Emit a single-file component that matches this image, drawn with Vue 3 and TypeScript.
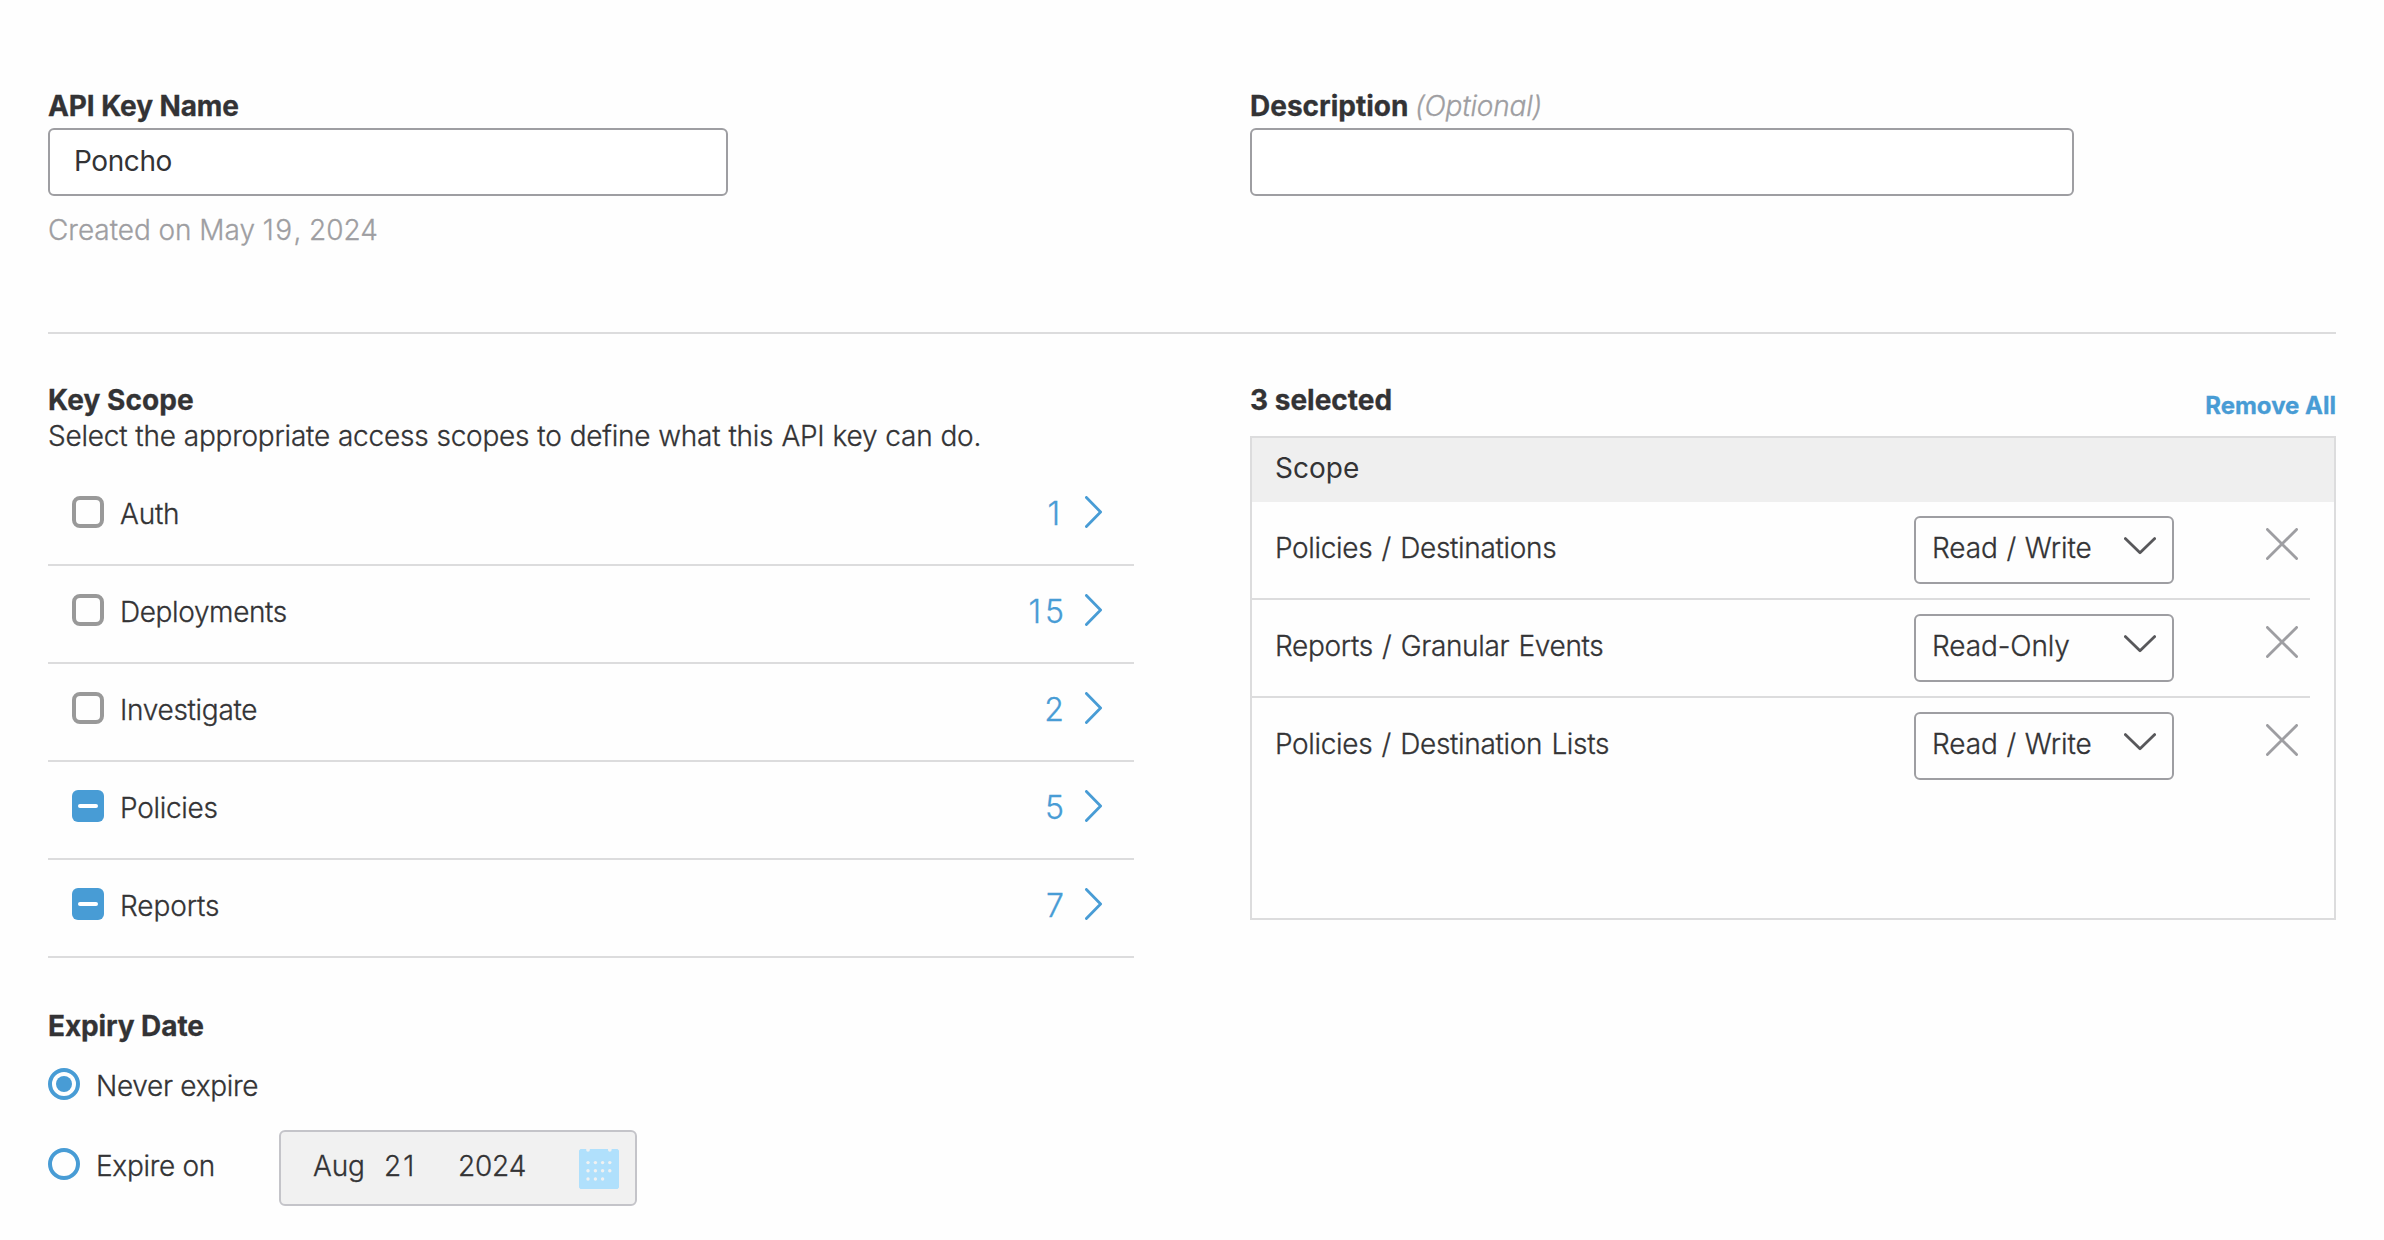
<script setup lang="ts">
import { computed, ref } from 'vue'

interface ScopeGroup {
  name: string
  count: number
  partial: boolean
  tracking: number
}

interface SelectedScope {
  path: string
  access: 'Read / Write' | 'Read-Only'
}

const keyName = ref('Poncho')
const description = ref('')
const expiry = ref<'never' | 'date'>('never')

const groups: ScopeGroup[] = [
  { name: 'Auth', count: 1, partial: false, tracking: -0.2 },
  { name: 'Deployments', count: 15, partial: false, tracking: -0.38 },
  { name: 'Investigate', count: 2, partial: false, tracking: -0.3 },
  { name: 'Policies', count: 5, partial: true, tracking: -0.28 },
  { name: 'Reports', count: 7, partial: true, tracking: -0.1 },
]

const selected = ref<SelectedScope[]>([
  { path: 'Policies / Destinations', access: 'Read / Write' },
  { path: 'Reports / Granular Events', access: 'Read-Only' },
  { path: 'Policies / Destination Lists', access: 'Read / Write' },
])

const selectedLabel = computed(() => `${selected.value.length} selected`)

function removeScope(index: number) {
  selected.value.splice(index, 1)
}

function removeAll() {
  selected.value = []
}
</script>

<template>
  <main class="page">
    <section class="columns details">
      <div>
        <label class="heading tight" for="key-name">API Key Name</label>
        <input id="key-name" v-model="keyName" class="input name-input" type="text" />
        <p class="created">Created on May <span class="created-day">19</span>, 2024</p>
      </div>
      <div>
        <label class="heading" for="description">Description <em class="optional">(Optional)</em></label>
        <input id="description" v-model="description" class="input description-input" type="text" />
      </div>
    </section>

    <section class="columns scopes">
      <div>
        <h2 class="heading wide">Key Scope</h2>
        <p class="intro">Select the appropriate access scopes to define what this API key can do.</p>
        <ul class="groups">
          <li v-for="group in groups" :key="group.name" class="group">
            <span class="checkbox" :class="{ partial: group.partial }"></span>
            <span class="group-name" :style="{ letterSpacing: group.tracking + 'px' }">{{ group.name }}</span>
            <span class="count" :class="{ single: group.count === 1 }">{{ group.count }}</span>
            <svg class="chevron-right" width="20" height="32" viewBox="0 0 20 32" aria-hidden="true">
              <path d="M2.4 1.4 L16.6 16 L2.4 30.6" />
            </svg>
          </li>
        </ul>
      </div>

      <div>
        <div class="selected-head">
          <h2 class="heading">{{ selectedLabel }}</h2>
          <button class="remove-all" type="button" @click="removeAll">Remove All</button>
        </div>
        <div class="table">
          <div class="table-head">Scope</div>
          <div v-for="(scope, index) in selected" :key="scope.path" class="table-row">
            <span class="path">{{ scope.path }}</span>
            <div class="select">
              <span>{{ scope.access }}</span>
              <svg class="chevron-down" width="32" height="18" viewBox="0 0 32 18" aria-hidden="true">
                <path d="M1.3 1.6 L16 15.8 L30.7 1.6" />
              </svg>
            </div>
            <button class="remove" type="button" aria-label="Remove" @click="removeScope(index)">
              <svg width="32" height="32" viewBox="0 0 32 32" aria-hidden="true">
                <path d="M1.4 1.4 L30.6 30.6 M30.6 1.4 L1.4 30.6" />
              </svg>
            </button>
          </div>
        </div>
      </div>
    </section>

    <section class="expiry">
      <h2 class="heading tight expiry-title">Expiry Date</h2>
      <div class="option" @click="expiry = 'never'">
        <span class="radio" :class="{ on: expiry === 'never' }"></span>
        <span>Never expire</span>
      </div>
      <div class="date-option">
        <div class="option" @click="expiry = 'date'">
          <span class="radio" :class="{ on: expiry === 'date' }"></span>
          <span>Expire on</span>
        </div>
        <div class="date">
          <span class="month">Aug</span>
          <span class="day">21</span>
          <span class="year">2024</span>
          <svg class="calendar" width="40" height="40" viewBox="0 0 40 40" aria-hidden="true">
            <path
              fill="#b0e0fc"
              d="M1.5 0 H7.2 V1 A1.8 1.8 0 0 0 10.8 1 V0 H29 V1 A1.8 1.8 0 0 0 32.6 1 V0 H38.5 L40 1.5 V38.5 L38.5 40 H1.5 L0 38.5 V1.5 Z"
            />
            <g fill="#f1f1f1">
              <circle cx="9" cy="13.6" r="1.7" />
              <circle cx="16.4" cy="13.6" r="1.7" />
              <circle cx="23.6" cy="13.6" r="1.7" />
              <circle cx="30.8" cy="13.6" r="1.7" />
              <circle cx="9" cy="21.8" r="1.7" />
              <circle cx="16.4" cy="21.8" r="1.7" />
              <circle cx="23.6" cy="21.8" r="1.7" />
              <circle cx="30.8" cy="21.8" r="1.7" />
              <circle cx="9" cy="30" r="1.7" />
              <circle cx="16.4" cy="30" r="1.7" />
              <circle cx="23.6" cy="30" r="1.7" />
            </g>
          </svg>
        </div>
      </div>
    </section>
  </main>
</template>

<style>
body {
  background: #fefefe;
}
</style>

<style scoped>
.page {
  box-sizing: border-box;
  width: 2384px;
  height: 1240px;
  padding: 88px 48px 0;
  font-family: Inter, 'Liberation Sans', sans-serif;
  font-size: 28px;
  font-weight: 300;
  line-height: 36px;
  color: #333335;
  /* Thickens the light weight to sit between light and regular. */
  -webkit-text-stroke: 0.3px;
}

.page * {
  box-sizing: border-box;
}

p,
h2,
ul {
  margin: 0;
  padding: 0;
}

button {
  padding: 0;
  border: 0;
  background: none;
  font: inherit;
  cursor: pointer;
}

.columns {
  display: grid;
  grid-template-columns: 1086px 1086px;
  column-gap: 116px;
}

.details {
  height: 246px;
  border-bottom: 2px solid #dcdcdd;
}

.heading {
  display: block;
  font-size: 28px;
  font-weight: 700;
  line-height: 36px;
}

.heading.tight {
  letter-spacing: -0.1px;
}

.heading.wide {
  letter-spacing: 0.1px;
}

.optional {
  font-weight: 300;
  letter-spacing: -0.2px;
  color: #9e9ea2;
}

.input {
  display: block;
  height: 68px;
  margin: 4px 0 0;
  padding: 0 24px 2px;
  border: 2px solid #9e9ea2;
  border-radius: 6px;
  outline: none;
  background: #fff;
  font: 400 28px/36px Inter, 'Liberation Sans', sans-serif;
  letter-spacing: -0.4px;
  color: #333335;
  -webkit-text-stroke: 0;
}

.name-input {
  width: 680px;
}

.description-input {
  width: 824px;
}

.created {
  margin-top: 16px;
  letter-spacing: -0.05px;
  color: #9e9ea2;
}

.created-day {
  letter-spacing: 1.4px;
}

.scopes {
  padding-top: 48px;
}

.intro {
  letter-spacing: -0.24px;
  word-spacing: 0.45px;
}

.groups {
  margin-top: 14px;
  list-style: none;
}

.group {
  display: flex;
  align-items: flex-start;
  height: 98px;
  padding: 28px 30px 0 24px;
  border-bottom: 2px solid #dcdcdd;
}

.checkbox {
  display: flex;
  align-items: center;
  justify-content: center;
  width: 32px;
  height: 32px;
  border: 4px solid #999;
  border-radius: 8px;
}

.checkbox.partial {
  border: 0;
  border-radius: 6px;
  background: #489cd5;
}

.checkbox.partial::before {
  content: '';
  width: 20px;
  height: 4px;
  border-radius: 2px;
  background: #fff;
}

.group-name {
  flex: 1;
  margin-left: 16px;
}

.count {
  margin-top: -2px;
  font-size: 32px;
  line-height: 40px;
  letter-spacing: 4px;
  color: #489cd5;
}

.count.single {
  padding-right: 4px;
}

svg {
  display: block;
}

.chevron-right {
  margin-left: 16px;
  fill: none;
  stroke: #489cd5;
  stroke-width: 2.8;
  stroke-linecap: round;
  stroke-linejoin: round;
}

.selected-head {
  display: flex;
  justify-content: space-between;
  height: 54px;
}

.remove-all {
  height: 36px;
  margin-top: 6px;
  font-size: 24px;
  font-weight: 700;
  color: #489cd5;
}

.table {
  height: 484px;
  border: 2px solid #dcdcdd;
}

.table-head {
  height: 64px;
  padding: 12px 23px;
  background: #efefef;
  font-weight: 400;
  -webkit-text-stroke: 0;
}

.table-row {
  display: flex;
  align-items: flex-start;
  height: 98px;
  margin-right: 24px;
  padding: 14px 12px 0 23px;
  border-bottom: 2px solid #dcdcdd;
}

.table-row:last-child {
  border-bottom-color: transparent;
}

.path {
  flex: 1;
  margin-top: 14px;
  letter-spacing: -0.33px;
  word-spacing: 1.7px;
}

.select {
  display: flex;
  justify-content: space-between;
  align-items: flex-start;
  width: 260px;
  height: 68px;
  padding: 12px 16px 0 16px;
  border: 2px solid #9e9ea2;
  border-radius: 6px;
  letter-spacing: -0.1px;
  word-spacing: 0.9px;
}

.chevron-down {
  margin-top: 7px;
  fill: none;
  stroke: #58585b;
  stroke-width: 2.8;
  stroke-linecap: round;
  stroke-linejoin: round;
}

.remove {
  width: 32px;
  height: 32px;
  margin: 12px 0 0 92px;
}

.remove path {
  stroke: #9e9ea2;
  stroke-width: 2.8;
  stroke-linecap: round;
}

.expiry {
  padding-top: 50px;
}

.expiry-title {
  margin-bottom: 24px;
}

.option {
  display: flex;
  align-items: flex-start;
  height: 36px;
  letter-spacing: -0.3px;
  cursor: pointer;
}

.radio {
  display: flex;
  align-items: center;
  justify-content: center;
  width: 32px;
  height: 32px;
  margin-right: 16px;
  border: 4px solid #489cd5;
  border-radius: 50%;
}

.radio.on::before {
  content: '';
  width: 16px;
  height: 16px;
  border-radius: 50%;
  background: #489cd5;
}

.date-option {
  display: flex;
  margin-top: 26px;
}

.date-option .option {
  width: 231px;
  height: 54px;
  padding-top: 18px;
}

.date {
  display: flex;
  width: 358px;
  height: 76px;
  padding: 16px 16px 0 32px;
  border: 2px solid #c4c4c9;
  border-radius: 6px;
  background: #f1f1f1;
}

.month {
  width: 71px;
  letter-spacing: -0.2px;
}

.day {
  width: 74px;
  letter-spacing: 2px;
}

.year {
  letter-spacing: -0.2px;
}

.calendar {
  margin: 1px 0 0 auto;
}
</style>
